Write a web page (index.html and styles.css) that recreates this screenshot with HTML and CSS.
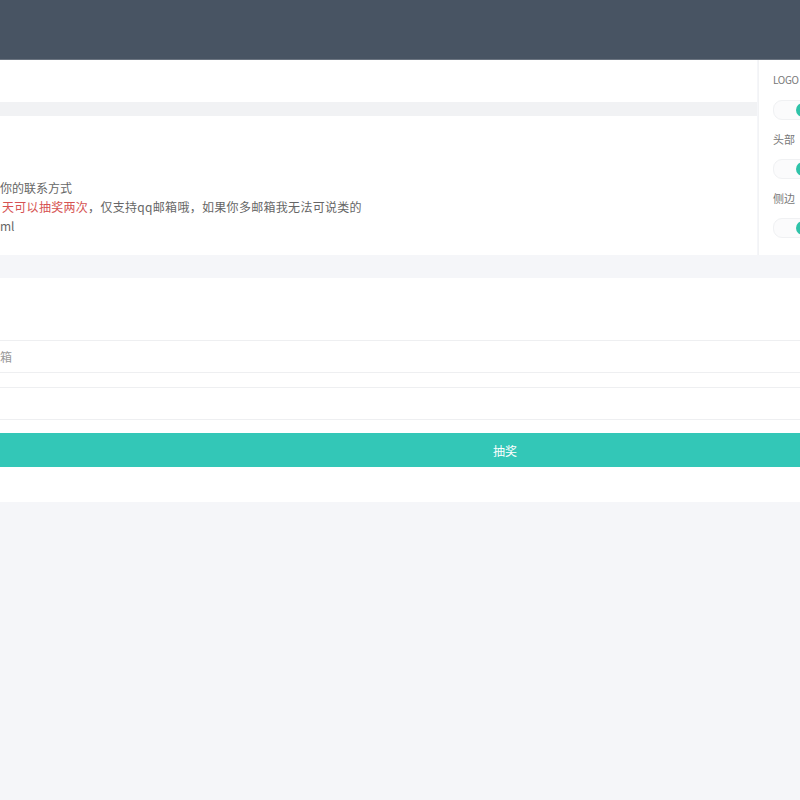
FILE: index.html
```html
<!DOCTYPE html>
<html lang="zh-CN">
<head>
  <meta charset="UTF-8">
  <meta name="viewport" content="width=device-width, initial-scale=1.0">
  <title>抽奖</title>
  <link rel="stylesheet" href="styles.css">
</head>
<body>
  <div class="header"></div>

  <div class="top">
    <div class="main-col">
      <div class="tabs"></div>
      <div class="card-head"></div>
      <div class="notice">
        <p>你的联系方式</p>
        <p class="indent"><span class="red">天可以抽奖两次</span>，仅支持qq邮箱哦，如果你多邮箱我无法可说类的</p>
        <p>ml</p>
      </div>
    </div>

    <div class="side-panel">
      <div class="side-label logo">LOGO</div>
      <div class="switch-row"><span class="switch"><span class="knob"></span></span></div>
      <div class="side-label">头部</div>
      <div class="switch-row"><span class="switch"><span class="knob"></span></span></div>
      <div class="side-label">侧边</div>
      <div class="switch-row"><span class="switch"><span class="knob"></span></span></div>
    </div>
  </div>

  <div class="form-card">
    <div class="form-title"></div>
    <input class="field" type="text" placeholder="箱">
    <input class="field" type="text">
    <button class="draw-btn">抽奖</button>
  </div>
</body>
</html>
```

FILE: styles.css
```css
body {
  margin: 0;
  background-color: #f5f6f9;
  font-family: "Noto Sans CJK SC", "Liberation Sans", sans-serif;
  font-size: 12px;
  color: #666;
}
.header {
  height: 60px;
  background-color: #485463;
  border-bottom: 1px solid #6b7480;
  box-sizing: border-box;
}
.top {
  display: flex;
}
.main-col {
  flex: 1;
}
.tabs {
  height: 42px;
  background-color: #fff;
}
.card-head {
  height: 14px;
  background-color: #f1f2f4;
}
.notice {
  height: 139px;
  background-color: #fff;
  padding-top: 62px;
  box-sizing: border-box;
}
.notice p {
  margin: 0;
  line-height: 19px;
  white-space: nowrap;
}
.notice .indent {
  padding-left: 2px;
  letter-spacing: 0.3px;
}
.red {
  color: #d65252;
}
.side-panel {
  width: 27px;
  height: 183px;
  margin-left: 1px;
  padding: 12px 0 0 14px;
  background-color: #fff;
  border-left: 1px solid #f2f3f5;
  overflow: hidden;
}
.side-label {
  font-size: 11px;
  line-height: 16px;
  color: #777;
  white-space: nowrap;
}
.side-label.logo {
  font-size: 10px;
  letter-spacing: -0.3px;
}
.switch-row {
  height: 43px;
  display: flex;
  align-items: center;
}
.switch {
  display: inline-flex;
  align-items: center;
  width: 44px;
  height: 18px;
  flex-shrink: 0;
  border-radius: 9px;
  background-color: #fbfbfc;
  border: 1px solid #f0f1f3;
  padding-left: 22px;
}
.knob {
  width: 14px;
  height: 14px;
  border-radius: 50%;
  background-color: #2fc3a9;
}
.form-card {
  margin-top: 23px;
  height: 224px;
  background-color: #fff;
  padding-top: 62px;
  box-sizing: border-box;
}
.field {
  display: block;
  width: 100%;
  height: 33px;
  margin: 0 0 14px;
  padding: 0;
  border: none;
  border-top: 1px solid #eeeff1;
  border-bottom: 1px solid #eeeff1;
  font-family: inherit;
  font-size: 12px;
  color: #666;
  box-sizing: border-box;
}
.field::placeholder {
  color: #999;
}
.draw-btn {
  display: block;
  width: 100%;
  height: 34px;
  margin-top: -1px;
  padding-left: 216px;
  border: none;
  background-color: #33c7b7;
  color: #fff;
  font-family: inherit;
  font-size: 12px;
  cursor: pointer;
}
```
